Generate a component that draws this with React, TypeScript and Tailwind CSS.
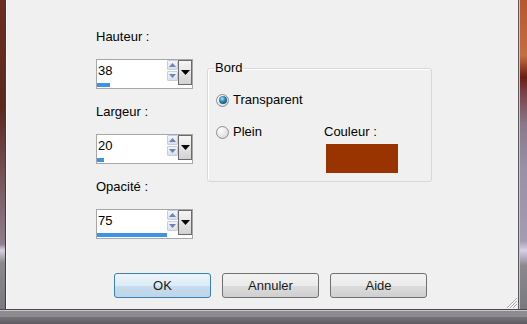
import React from "react";

const font = { fontFamily: '"Liberation Sans", Arial, sans-serif' };

function ArrowBtn({ up }: { up?: boolean }) {
  return (
    <div className="flex h-[10px] w-[11px] items-center justify-center rounded-[1px] border border-[#c7cedb] bg-[linear-gradient(to_bottom,#f3f6fb,#d9e0ec)]">
      <svg width="7" height="4" viewBox="0 0 7 4">
        {up ? (
          <polygon points="3.5,0 7,4 0,4" fill="#6f84b3" />
        ) : (
          <polygon points="0,0 7,0 3.5,4" fill="#6f84b3" />
        )}
      </svg>
    </div>
  );
}

function Spin({ value, bar }: { value: string; bar: number }) {
  return (
    <div className="flex h-[30px] w-[97px] border border-[#a7a7a7] bg-white">
      <div className="flex w-[81px] flex-col">
        <div className="flex h-[22px]">
          <div className="flex-1 pl-[1px] text-[13px] leading-[22px] text-black">{value}</div>
          <div className="flex w-[11px] flex-col gap-[1px]">
            <ArrowBtn up />
            <ArrowBtn />
          </div>
        </div>
        <div className="mt-[1px] h-[4px]">
          <div className="h-full bg-[#3d93e6]" style={{ width: bar }} />
        </div>
      </div>
      <div className="flex h-[25px] w-[14px] items-center justify-center border border-[#6b6b6b] bg-[linear-gradient(to_bottom,#f6f6f6,#d2d2d2)]">
        <svg width="9" height="5" viewBox="0 0 9 5">
          <polygon points="0,0 9,0 4.5,5" fill="#000" />
        </svg>
      </div>
    </div>
  );
}

function Radio({ checked }: { checked?: boolean }) {
  return (
    <div className="flex h-[13px] w-[13px] items-center justify-center rounded-full border border-[#8e8f8f] bg-[radial-gradient(circle_at_35%_30%,#ffffff,#e4e4e4_60%,#c9c9c9)]">
      {checked && (
        <div className="h-[8px] w-[8px] rounded-full bg-[radial-gradient(circle_at_40%_35%,#a8e4f6,#1f7fae_45%,#0a3a52)]" />
      )}
    </div>
  );
}

function Button({ label, primary }: { label: string; primary?: boolean }) {
  return (
    <div
      className={
        primary
          ? "flex h-[25px] w-[97px] items-center justify-center rounded-[3px] border border-[#3c7fb1] bg-[linear-gradient(to_bottom,#edf5fb_0%,#dcebf6_50%,#c8dded_51%,#bcd5e8_100%)] text-[13px] text-[#1a1a1a]"
          : "flex h-[25px] w-[97px] items-center justify-center rounded-[3px] border border-[#707070] bg-[linear-gradient(to_bottom,#f2f2f2_0%,#ebebeb_50%,#dddddd_51%,#cfcfcf_100%)] text-[13px] text-[#1a1a1a]"
      }
    >
      {label}
    </div>
  );
}

export default function App() {
  return (
    <div className="flex h-[324px] w-[527px] flex-col overflow-hidden bg-[#7a7880]" style={font}>
      <div className="flex h-[309px]">
        <div className="w-[5px] bg-[linear-gradient(to_bottom,#6e2e20_0%,#5a281e_35%,#7b5d66_62%,#8f7f8c_79%,#d8d0e0_81%,#8c8890_85%,#7a7880_100%)]" />
        <div className="w-[1px] bg-[#3c3c3c]" />
        <div className="w-[1px] bg-[#fbfbfb]" />
        <div className="relative flex flex-1 flex-col bg-[#f0f0f0]">
          <div className="flex pl-[89px] pt-[29px]">
            <div className="flex flex-col">
              <div className="h-[16px] text-[13px] leading-[16px] text-black">Hauteur :</div>
              <div className="mt-[14px]">
                <Spin value="38" bar={13} />
              </div>
              <div className="mt-[15px] h-[16px] text-[13px] leading-[16px] text-black">Largeur :</div>
              <div className="mt-[14px]">
                <Spin value="20" bar={7} />
              </div>
              <div className="mt-[15px] h-[16px] text-[13px] leading-[16px] text-black">Opacité :</div>
              <div className="mt-[14px]">
                <Spin value="75" bar={70} />
              </div>
            </div>
            <fieldset className="ml-[14px] mt-[32px] h-[121px] w-[225px] rounded-[3px] border border-[#d5d9dd] shadow-[inset_1px_1px_0_#ffffff]">
              <legend className="ml-[6px] px-[1px] text-[13px] leading-[14px] text-black">Bord</legend>
              <div className="flex flex-col pl-[8px] pt-[18px]">
                <div className="flex h-[14px] items-center">
                  <Radio checked />
                  <span className="ml-[4px] text-[13px] leading-[14px] text-black">Transparent</span>
                </div>
                <div className="mt-[18px] flex">
                  <div className="flex h-[14px] w-[108px] items-center">
                    <Radio />
                    <span className="ml-[4px] text-[13px] leading-[14px] text-black">Plein</span>
                  </div>
                  <div className="flex flex-col">
                    <div className="h-[14px] text-[13px] leading-[14px] text-black">Couleur :</div>
                    <div className="ml-[2px] mt-[5px] h-[29px] w-[72px] bg-[#993300]" />
                  </div>
                </div>
              </div>
            </fieldset>
          </div>
          <div className="mt-[34px] flex gap-[11px] pl-[107px]">
            <Button label="OK" primary />
            <Button label="Annuler" />
            <Button label="Aide" />
          </div>
          <svg className="absolute bottom-[1px] right-[1px]" width="11" height="11" viewBox="0 0 11 11">
            <g stroke="#a8a8a8" strokeWidth="1">
              <line x1="11" y1="1" x2="1" y2="11" />
              <line x1="11" y1="4" x2="4" y2="11" />
              <line x1="11" y1="7" x2="7" y2="11" />
            </g>
            <g stroke="#ffffff" strokeWidth="1">
              <line x1="11" y1="2" x2="2" y2="11" />
              <line x1="11" y1="5" x2="5" y2="11" />
              <line x1="11" y1="8" x2="8" y2="11" />
            </g>
          </svg>
        </div>
        <div className="w-[1px] bg-[#5a5a5a]" />
        <div className="w-[1px] bg-[#c8c4cc]" />
        <div className="w-[7px] bg-[linear-gradient(to_bottom,#b8562e_0%,#c86c42_18%,#6a1c12_25%,#7a4048_30%,#8a7888_40%,#9a90a8_55%,#a49cb2_78%,#d8d0e6_81%,#8c8890_86%,#7a7880_100%)]" />
      </div>
      <div className="h-[1px] bg-[#4a4a4e]" />
      <div className="h-[1px] bg-[#c8c8cc]" />
      <div className="h-[6px] bg-[#8e8a92]" />
      <div className="flex-1 bg-[linear-gradient(to_bottom,#77747a,#5e5c62)]" />
    </div>
  );
}
